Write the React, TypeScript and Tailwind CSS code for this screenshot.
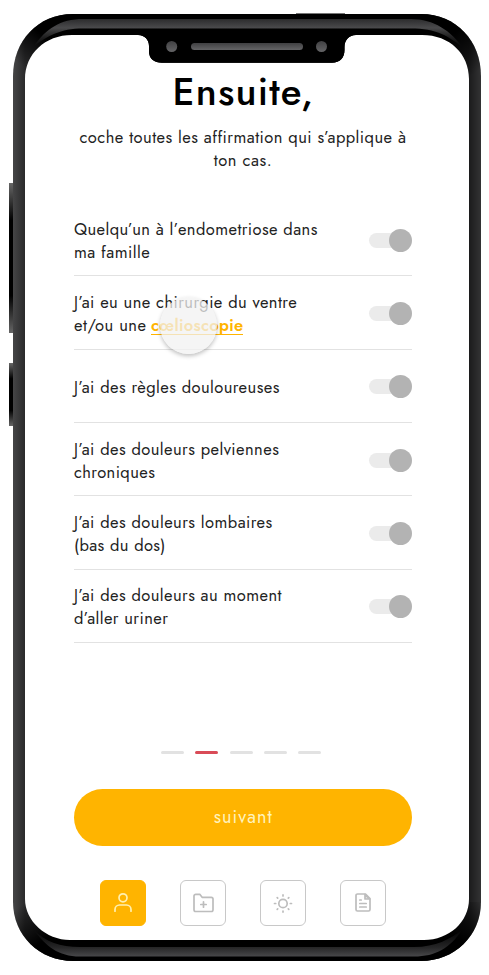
import { useLayoutEffect, useRef, type ReactNode } from "react";

/** One line of text tracked out so that it spans `width` pixels. */
function Line({ text, width, className = "" }: { text: string; width: number; className?: string }) {
  const ref = useRef<HTMLSpanElement>(null);
  useLayoutEffect(() => {
    const el = ref.current;
    if (!el) return;
    el.style.letterSpacing = "0px";
    const natural = el.getBoundingClientRect().width;
    const spacing = (width - natural) / (text.length - 1);
    el.style.letterSpacing = `${spacing}px`;
    el.style.marginRight = `${-spacing}px`;
  }, [text, width]);
  return (
    <span ref={ref} className={`inline-block whitespace-pre ${className}`}>
      {text}
    </span>
  );
}

function Bezel() {
  return (
    <svg className="absolute inset-0" width="489" height="975" viewBox="0 0 489 975" fill="none" aria-hidden="true">
      <defs>
        <linearGradient id="key" x1="0" y1="0" x2="0" y2="1">
          <stop offset="0" stopColor="#666" />
          <stop offset="0.25" stopColor="#000" />
          <stop offset="0.75" stopColor="#000" />
          <stop offset="1" stopColor="#666" />
        </linearGradient>
        <linearGradient id="left" x1="13" y1="0" x2="25" y2="0" gradientUnits="userSpaceOnUse">
          <stop offset="0" stopColor="#454546" />
          <stop offset="1" stopColor="#2a2a2b" />
        </linearGradient>
        <linearGradient id="right" x1="469" y1="0" x2="481" y2="0" gradientUnits="userSpaceOnUse">
          <stop offset="0" stopColor="#1b1b1c" />
          <stop offset="1" stopColor="#333334" />
        </linearGradient>
        <linearGradient id="shadeTop" x1="22" y1="66" x2="46" y2="38" gradientUnits="userSpaceOnUse">
          <stop offset="0" stopColor="#000" stopOpacity="0" />
          <stop offset="1" stopColor="#000" />
        </linearGradient>
        <linearGradient id="shadeTopRight" x1="474" y1="74" x2="448" y2="38" gradientUnits="userSpaceOnUse">
          <stop offset="0" stopColor="#000" stopOpacity="0" />
          <stop offset="1" stopColor="#000" />
        </linearGradient>
        <linearGradient id="shadeBottom" x1="20" y1="906" x2="46" y2="938" gradientUnits="userSpaceOnUse">
          <stop offset="0" stopColor="#000" stopOpacity="0" />
          <stop offset="1" stopColor="#000" />
        </linearGradient>
        <linearGradient id="shadeBottomRight" x1="476" y1="896" x2="450" y2="934" gradientUnits="userSpaceOnUse">
          <stop offset="0" stopColor="#000" stopOpacity="0" />
          <stop offset="1" stopColor="#000" />
        </linearGradient>
        <linearGradient id="sheenTop" x1="0" y1="19" x2="0" y2="46" gradientUnits="userSpaceOnUse">
          <stop offset="0" stopColor="#2c2c2d" />
          <stop offset="0.33" stopColor="#4a4a4c" />
          <stop offset="0.45" stopColor="#39393a" />
          <stop offset="1" stopColor="#2e2e2f" stopOpacity="0" />
        </linearGradient>
        <linearGradient id="sheenBottom" x1="0" y1="930" x2="0" y2="957" gradientUnits="userSpaceOnUse">
          <stop offset="0" stopColor="#252526" stopOpacity="0" />
          <stop offset="0.64" stopColor="#252526" />
          <stop offset="1" stopColor="#4a4a4c" />
        </linearGradient>
        <linearGradient id="lens" x1="0" y1="0" x2="0" y2="1">
          <stop offset="0" stopColor="#404042" />
          <stop offset="1" stopColor="#646466" />
        </linearGradient>
      </defs>
      <rect x="9" y="183" width="5" height="150" fill="url(#key)" />
      <rect x="9" y="363" width="5" height="63" fill="url(#key)" />
      <rect x="296" y="13" width="49" height="2" fill="#777" />
      <path d="M462 935h5v4h-5z" fill="#000" />
      <path d="M247 14H73C38 14 13 41 13 76V902C13 936 40 961 73 961H247Z" fill="url(#left)" />
      <path d="M247 14H421C456 14 481 41 481 76V902C481 936 454 961 421 961H247Z" fill="url(#right)" />
      <path d="M247 14H73C38 14 13 41 13 76H247Z" fill="url(#shadeTop)" />
      <path d="M247 14H421C456 14 481 41 481 76H247Z" fill="url(#shadeTopRight)" />
      <path d="M13 902C13 936 40 961 73 961H247V902Z" fill="url(#shadeBottom)" />
      <path d="M481 902C481 936 454 961 421 961H247V902Z" fill="url(#shadeBottomRight)" />
      <path d="M34 46C46 29 60 19 83 19H411C434 19 451 31 463 48C449 36 436 28.500 411 28.500H83C60 28.500 48 36 34 46Z" fill="url(#sheenTop)" />
      <path d="M34 930C46 942 60 947 80 947H414C436 947 450 939 462 930C450 948 436 956.500 414 956.500H80C58 956.500 46 946 34 930Z" fill="url(#sheenBottom)" />
      <path d="M72 35H138C145 35 149 40 149 46V51C149 59 154 62.700 162 62.700H332C340 62.700 344.500 58 344.500 50V47C344.500 40 349 35 356 35H422C450 35 469 54 469 79V899C469 922 449 940 424 940H70C46 940 25 921 25 899V79C25 54 45 35 72 35Z" fill="#fff" />
      <path d="M136 34H358V35H356C349 35 344.500 40 344.500 47V50C344.500 58 340 62.700 332 62.700H162C154 62.700 149 59 149 51V46C149 40 145 35 138 35Z" fill="#000" />
      <circle cx="171.700" cy="46.500" r="5.500" fill="url(#lens)" />
      <circle cx="321.500" cy="46.500" r="5.500" fill="url(#lens)" />
      <rect x="191" y="43" width="112" height="7" rx="3.500" fill="url(#lens)" />
    </svg>
  );
}

function Toggle() {
  return (
    <span className="flex h-[23px] w-[43px] shrink-0 items-center">
      <span className="h-[15px] w-[34px] rounded-full bg-[#ebebeb]" />
      <span className="-ml-3.5 size-[23px] shrink-0 rounded-full bg-[#b3b3b3]" />
    </span>
  );
}

function Row({ children }: { children: ReactNode }) {
  return (
    <li className="flex h-[73.3px] items-center justify-between border-b-[1.5px] border-[#e2e2e2]">
      <div className="flex flex-col items-start pt-[3px]">{children}</div>
      <div className="pt-[2px]">
        <Toggle />
      </div>
    </li>
  );
}

const statements: [string, number][][] = [
  [["Quelqu’un à l’endometriose dans", 243.3], ["ma famille", 75.7]],
  [["J’ai eu une chirurgie du ventre", 222.7], ["et/ou une", 72]],
  [["J’ai des règles douloureuses", 205.3]],
  [["J’ai des douleurs pelviennes", 204.8], ["chroniques", 80.8]],
  [["J’ai des douleurs lombaires", 198.2], ["(bas du dos)", 91.5]],
  [["J’ai des douleurs au moment", 207.5], ["d’aller uriner", 93.8]],
];

function NavButton({ active = false, children }: { active?: boolean; children: ReactNode }) {
  return (
    <button
      className={`flex size-[46px] items-center justify-center rounded-md border-[1.5px] ${
        active ? "border-[#ffb400] bg-[#ffb400] text-[#fff0b0]" : "border-[#c8c8c8] bg-white text-[#bdbdbd]"
      }`}
    >
      <svg width="24" height="24" viewBox="0 0 24 24" fill="none" stroke="currentColor" strokeWidth="1.700" strokeLinecap="round" strokeLinejoin="round">
        {children}
      </svg>
    </button>
  );
}

export default function App() {
  return (
    <main className="relative h-[975px] w-[489px] overflow-hidden bg-white font-['Jost','Lato',sans-serif] text-[16.500px] leading-[23px] text-[#222]">
      <Bezel />
      <div className="relative flex h-full flex-col pr-[77.5px] pl-[74px] pt-[68px]">
        <h1 className="flex h-[48px] justify-center text-[38.500px] leading-[48px] font-medium text-black">
          <Line text="Ensuite," width={140.5} />
        </h1>
        <p className="mt-[10px] flex flex-col items-center">
          <Line text="coche toutes les affirmation qui s’applique à" width={326.5} />
          <Line text="ton cas." width={58} />
        </p>

        <ul className="mt-[31.200px]">
          {statements.map((lines, i) => (
            <Row key={i}>
              {lines.map(([text, width]) => (
                <div key={text} className="flex">
                  <Line text={text} width={width} />
                  {text === "et/ou une" && (
                    <a className="relative ml-[5px] font-semibold text-[#ffb400]">
                      <Line text="cœlioscopie" width={92.2} />
                      <span className="absolute bottom-[2px] left-0 h-[1.5px] w-[92px] bg-[#ffb400]" />
                      <span className="absolute top-[-17px] left-[9px] size-[57px] rounded-full bg-[#f2f2f2]/75 shadow-[0_2px_4px_rgba(0,0,0,0.25)]" />
                    </a>
                  )}
                </div>
              ))}
            </Row>
          ))}
        </ul>

        <div className="mt-[108.500px] ml-[87px] flex gap-[11.3px]">
          {[0, 1, 2, 3, 4].map((i) => (
            <span key={i} className={`h-[3px] w-[23px] rounded-full ${i === 1 ? "bg-[#d94b57]" : "bg-[#e2e2e2]"}`} />
          ))}
        </div>

        <button className="mt-[34.500px] flex h-[57px] shrink-0 items-center justify-center rounded-full bg-[#ffb400] text-[18px] text-[#fff3bd]">
          <Line text="suivant" width={58} />
        </button>

        <nav className="mt-[34px] ml-[26px] flex gap-[34px]">
          <NavButton active>
            <circle cx="12" cy="6.800" r="4" />
            <path d="M4 20.200V18.500a4.500 4.500 0 0 1 4.500-4.500h7a4.500 4.500 0 0 1 4.500 4.500v1.700" />
          </NavButton>
          <NavButton>
            <path d="M3 5a1.700 1.700 0 0 1 1.700-1.700h4.100l2.300 3h9.200a1.700 1.700 0 0 1 1.700 1.700v10.800a1.700 1.700 0 0 1-1.700 1.700H4.700a1.700 1.700 0 0 1-1.700-1.700Z" />
            <path d="M12.500 10.800v5.400M9.800 13.500h5.400" />
          </NavButton>
          <NavButton>
            <circle cx="12" cy="12.500" r="4.200" />
            <path d="M12 3.900v1M12 20.100v1M3.500 12.500h1.200M19.300 12.500h1.200M6.200 6.700l.5.500M17.300 17.800l.5.500M6.200 18.300l.5-.5M17.300 7.200l.5-.5" />
          </NavButton>
          <NavButton>
            <path d="M14.500 3H6.500A1.500 1.500 0 0 0 5 4.500v14A1.500 1.500 0 0 0 6.500 20h11a1.500 1.500 0 0 0 1.500-1.500v-11Z" />
            <path d="M14 3.500V8h4.500Z" fill="currentColor" fillOpacity="0.4" />
            <path d="M8.800 9h1.400M8.800 12.500h6.400M8.800 16h6.400" />
          </NavButton>
        </nav>
      </div>
    </main>
  );
}
